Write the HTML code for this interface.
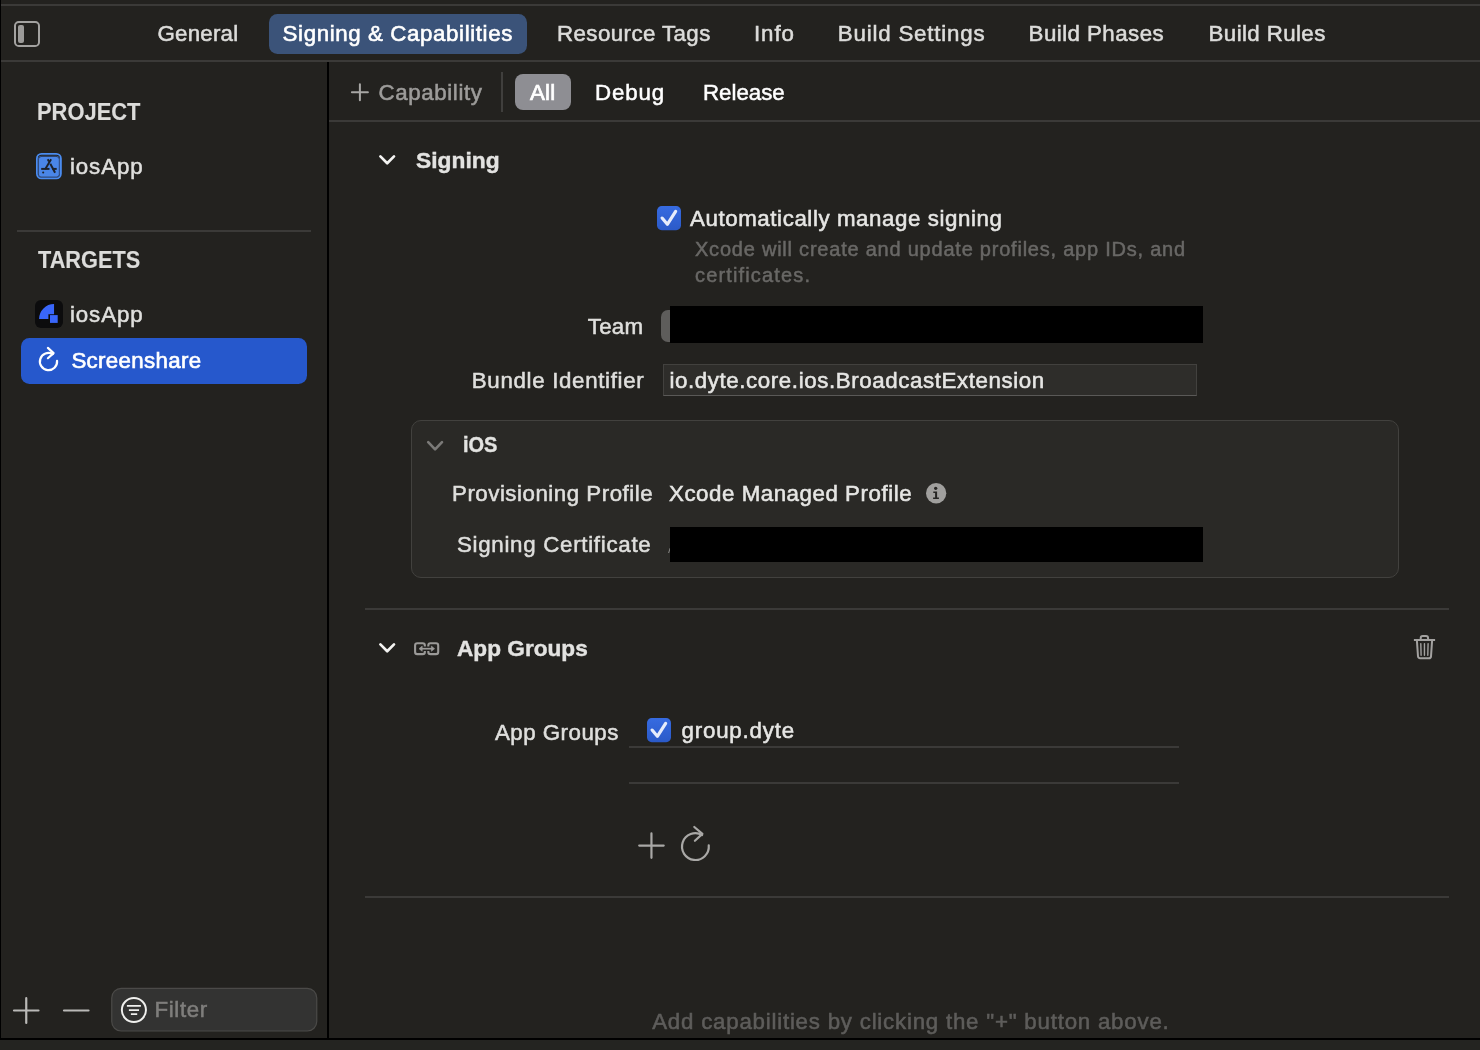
<!DOCTYPE html>
<html><head><meta charset="utf-8"><title>iosApp — Signing &amp; Capabilities</title>
<style>
html,body{margin:0;padding:0;background:#23221f;}
body{width:1480px;height:1050px;overflow:hidden;font-family:"Liberation Sans",sans-serif;}
#root{position:relative;width:1480px;height:1050px;overflow:hidden;background:#23221f;}
.t{position:absolute;white-space:nowrap;font-family:"Liberation Sans",sans-serif;}
.a{position:absolute;}
svg{position:absolute;overflow:visible;}
#txt{position:absolute;left:0;top:0;width:1480px;height:1050px;will-change:transform;}
.t{-webkit-text-stroke:0.55px currentColor;}

</style></head>
<body>
<div id="root">
<!-- window chrome lines -->
<div class="a" style="left:0;top:0;width:1.1px;height:1038px;background:#000"></div>
<div class="a" style="left:1px;top:4px;width:1479px;height:2px;background:#3b3a38"></div>
<div class="a" style="left:1px;top:60px;width:1479px;height:2px;background:#3b3a38"></div>
<div class="a" style="left:327px;top:62px;width:2px;height:976px;background:#000"></div>
<div class="a" style="left:0;top:1038px;width:1480px;height:2px;background:#000"></div>
<div class="a" style="left:0;top:1040px;width:1480px;height:10px;background:#242421"></div>
<!-- sidebar toggle -->
<svg style="left:0;top:0" width="60" height="60" viewBox="0 0 60 60">
 <rect x="15" y="22" width="24" height="24" rx="3.8" fill="none" stroke="#a3a2a0" stroke-width="2"/>
 <rect x="18" y="25" width="6" height="18" rx="2" fill="#9c9b99"/>
</svg>
<!-- selected tab -->
<div class="a" style="left:269px;top:13.8px;width:258px;height:40px;border-radius:8.5px;background:#3b5379"></div>
<!-- sidebar -->
<div class="a" style="left:17px;top:230px;width:294px;height:2px;background:#3b3a38"></div>
<div class="a" style="left:21px;top:338px;width:286px;height:45.75px;border-radius:8.5px;background:#2658cc"></div>
<!-- project icon -->
<svg style="left:35.9px;top:152.9px" width="25.8" height="26.3" viewBox="0 0 25.8 26.3">
 <rect x="0.9" y="0.9" width="24" height="24.5" rx="4.6" fill="none" stroke="#4a8cf0" stroke-width="1.8"/>
 <rect x="2.9" y="3.9" width="20" height="19.9" rx="2.2" fill="#4a86e8"/>
 <rect x="2.3" y="3.2" width="21.2" height="21.2" rx="2.8" fill="none" stroke="#35599c" stroke-width="0.9"/>
 <circle cx="7.2" cy="19.5" r="1.05" fill="#1d2128"/>
 <g stroke="#1d2128" stroke-width="1.95" stroke-linecap="butt" fill="none">
  <path d="M15.1 6.3 L9.2 16.3"/>
  <path d="M11.7 6.3 L13 8.5"/>
  <path d="M14.3 10.7 L19.1 19.8"/>
  <path d="M5.2 15.9 H13.5"/>
  <path d="M16.3 15.9 H20.7"/>
 </g>
</svg>
<!-- dyte app icon -->
<svg style="left:34.9px;top:299.9px" width="28" height="28" viewBox="0 0 28 28">
 <rect x="0" y="0" width="28" height="28" rx="6" fill="#0c0c0d"/>
 <path d="M4.05 19.05 A15 15 0 0 1 19.05 4.05 V14.2 H13.4 V19.05 Z" fill="#3966fa"/>
 <rect x="15" y="15.1" width="7.7" height="7.8" fill="#3966fa"/>
</svg>
<!-- refresh icon white -->
<svg style="left:0px;top:0px" width="80" height="400" viewBox="0 0 80 400">
 <g fill="none" stroke="#fff" stroke-width="2.2" stroke-linecap="round" stroke-linejoin="round">
  <path d="M57.07 360.75 A8.6 8.6 0 1 1 52.8 354.05"/>
  <path d="M47.9 347.9 L53.6 353.1 L47.9 358.2"/>
 </g>
</svg>
<!-- sidebar bottom -->
<svg style="left:0;top:980px" width="330" height="60" viewBox="0 0 330 60">
 <g stroke="#bab9b7" stroke-width="2.2" stroke-linecap="round">
  <path d="M14 30.5 H38.5 M26.25 18.2 V43"/>
  <path d="M64 30.5 H88.5"/>
 </g>
 <rect x="111.75" y="8.4" width="205" height="42.6" rx="9.5" fill="#333332" stroke="#4b4a48" stroke-width="1.2"/>
 <circle cx="133.9" cy="29.95" r="12.05" fill="none" stroke="#f0f0ee" stroke-width="2"/>
 <g stroke="#f0f0ee" stroke-width="1.8" stroke-linecap="butt">
  <path d="M126.9 25.9 H140.9 M128.9 30.1 H139.05 M130.9 34.1 H137.2"/>
 </g>
</svg>
<!-- sub header -->
<div class="a" style="left:329px;top:120px;width:1151px;height:2px;background:#3b3a38"></div>
<svg style="left:345px;top:80px" width="30" height="26" viewBox="0 0 30 26">
 <path d="M6.9 12.2 H22.9 M14.9 4.2 V20.2" stroke="#a8a7a5" stroke-width="2" stroke-linecap="round"/>
</svg>
<div class="a" style="left:501.4px;top:72.2px;width:1.3px;height:39.4px;background:#403f3d"></div>
<div class="a" style="left:514.9px;top:73.8px;width:56px;height:36.2px;border-radius:8px;background:#8e8e93"></div>
<!-- Signing chevron -->
<svg style="left:375px;top:150px" width="24" height="20" viewBox="0 0 24 20">
 <path d="M5.4 6.4 L12.2 13.2 L19 6.4" fill="none" stroke="#f4f4f2" stroke-width="2.7" stroke-linecap="round" stroke-linejoin="round"/>
</svg>
<!-- checkbox 1 -->
<svg style="left:657px;top:206px" width="24" height="24.2" viewBox="0 0 24 24.2">
 <defs><linearGradient id="cb" x1="0" y1="0" x2="0" y2="1"><stop offset="0" stop-color="#376be1"/><stop offset="1" stop-color="#2b5ac8"/></linearGradient></defs>
 <rect width="24" height="24.2" rx="4.8" fill="url(#cb)"/>
 <path d="M5.1 12.1 L10.35 18.35 L18.65 5.35" fill="none" stroke="#e6ecfb" stroke-width="3.2" stroke-linecap="round" stroke-linejoin="round"/>
</svg>
<!-- team popup -->
<div class="a" style="left:660.9px;top:309.9px;width:14px;height:32px;border-radius:7px 0 0 7px;background:#5e5d5b"></div>
<div class="a" style="left:670.2px;top:306.3px;width:532.5px;height:36.3px;background:#000"></div>
<!-- bundle field -->
<div class="a" style="left:662.9px;top:364px;width:534.3px;height:32px;box-sizing:border-box;background:#2e2d2a;border:1.1px solid #42413e;border-bottom-color:#5a5957"></div>
<!-- iOS box -->
<div class="a" style="left:411px;top:420px;width:988px;height:158px;box-sizing:border-box;border:1.7px solid #42413e;border-radius:10px;background:#2a2926"></div>
<svg style="left:423px;top:436px" width="24" height="20" viewBox="0 0 24 20">
 <path d="M5.2 6.2 L12.1 13.4 L19 6.2" fill="none" stroke="#7b7a78" stroke-width="2.6" stroke-linecap="round" stroke-linejoin="round"/>
</svg>
<!-- info icon -->
<svg style="left:925.9px;top:482.7px" width="20.3" height="20.5" viewBox="0 0 20.3 20.5">
 <circle cx="10.15" cy="10.25" r="10.15" fill="#a09f9d"/>
 <g fill="#262523"><circle cx="9.7" cy="5.3" r="1.65"/><path d="M7.3 8.5 H11.1 V14.4 H12.9 V16 H7.1 V14.4 H9.1 V9.9 H7.3 Z"/></g>
</svg>
<div class="a" style="left:669.4px;top:547.5px;width:1.4px;height:4.5px;background:#8a8987;transform:skewX(-18deg)"></div>
<div class="a" style="left:670.2px;top:526.6px;width:532.5px;height:35.7px;background:#000"></div>
<!-- section separators -->
<div class="a" style="left:365px;top:608px;width:1084px;height:2px;background:#3b3a38"></div>
<div class="a" style="left:365px;top:896px;width:1084px;height:2px;background:#3b3a38"></div>
<!-- App Groups header -->
<svg style="left:375px;top:638px" width="24" height="20" viewBox="0 0 24 20">
 <path d="M5.4 6.4 L12.2 13.2 L19 6.4" fill="none" stroke="#f4f4f2" stroke-width="2.7" stroke-linecap="round" stroke-linejoin="round"/>
</svg>
<svg style="left:400px;top:625px" width="60" height="40" viewBox="400 625 60 40">
 <g fill="none" stroke="#9b9a98" stroke-width="2.1" stroke-linecap="butt" stroke-linejoin="round">
  <path d="M424.85 646.4 V645.5 Q424.85 643.3 422.65 643.3 H417.3 Q415.1 643.3 415.1 645.5 V651.9 Q415.1 654.1 417.3 654.1 H422.65 Q424.85 654.1 424.85 651.9 V651"/>
  <path d="M428.3 646.4 V645.5 Q428.3 643.3 430.5 643.3 H436 Q438.2 643.3 438.2 645.5 V651.9 Q438.2 654.1 436 654.1 H430.5 Q428.3 654.1 428.3 651.9 V651"/>
 </g>
 <path d="M420.6 648.7 H433" stroke="#9b9a98" stroke-width="1.7" fill="none"/>
 <path d="M419 648.7 L422.2 646.1 V651.3 Z M434.6 648.7 L431.4 646.1 V651.3 Z" fill="#9b9a98" stroke="#9b9a98" stroke-width="0.6" stroke-linejoin="round"/>
</svg>
<!-- trash -->
<svg style="left:1395px;top:627px" width="60" height="40" viewBox="1395 627 60 40">
 <g fill="none" stroke="#a3a2a0" stroke-width="2" stroke-linecap="butt" stroke-linejoin="round">
  <path d="M1413.9 640 H1435.1"/>
  <path d="M1420.7 639.6 V637.9 Q1420.7 635.9 1422.7 635.9 H1426.05 Q1428.05 635.9 1428.05 637.9 V639.6"/>
  <path d="M1416.9 640.6 L1418 656.3 Q1418.15 658.2 1420.1 658.2 H1428.9 Q1430.85 658.2 1431 656.3 L1432.1 640.6"/>
 </g>
 <g fill="none" stroke="#a3a2a0" stroke-width="1.4" stroke-linecap="round">
  <path d="M1420.8 643.6 L1421.1 655.2 M1424.45 643.6 V655.2 M1428.1 643.6 L1427.8 655.2"/>
 </g>
</svg>
<!-- checkbox 2 -->
<svg style="left:647.1px;top:717.9px" width="24" height="24.2" viewBox="0 0 24 24.2">
 <rect width="24" height="24.2" rx="4.8" fill="url(#cb)"/>
 <path d="M5.1 12.1 L10.35 18.35 L18.65 5.35" fill="none" stroke="#e6ecfb" stroke-width="3.2" stroke-linecap="round" stroke-linejoin="round"/>
</svg>
<div class="a" style="left:629px;top:746px;width:550px;height:2px;background:#3b3a38"></div>
<div class="a" style="left:629px;top:782px;width:550px;height:2px;background:#3b3a38"></div>
<!-- plus + refresh -->
<svg style="left:600px;top:790px" width="185" height="105" viewBox="600 790 185 105">
 <g fill="none" stroke="#a9a8a6" stroke-width="2.2" stroke-linecap="round" stroke-linejoin="round">
  <path d="M639.2 845.6 H663.7 M651.45 833.4 V857.8"/>
  <path d="M708.75 845.4 A13.4 13.4 0 1 1 702.1 835"/>
  <path d="M694.3 827 L702.4 833.9 L694.9 840.8"/>
 </g>
</svg>

<div id="txt">
<span id="t1" class="t" style="left:157.40px;top:22.92px;font-size:22.3px;line-height:22.3px;font-weight:400;color:#dcdcda;letter-spacing:0.250px;">General</span>
<span id="t2" class="t" style="left:282.60px;top:22.92px;font-size:22.3px;line-height:22.3px;font-weight:400;color:#ffffff;letter-spacing:0.610px;-webkit-text-stroke:0.6px #fff;">Signing &amp; Capabilities</span>
<span id="t3" class="t" style="left:557.00px;top:22.92px;font-size:22.3px;line-height:22.3px;font-weight:400;color:#dcdcda;letter-spacing:0.417px;">Resource Tags</span>
<span id="t4" class="t" style="left:754.00px;top:22.92px;font-size:22.3px;line-height:22.3px;font-weight:400;color:#dcdcda;letter-spacing:0.900px;">Info</span>
<span id="t5" class="t" style="left:837.80px;top:22.92px;font-size:22.3px;line-height:22.3px;font-weight:400;color:#dcdcda;letter-spacing:0.808px;">Build Settings</span>
<span id="t6" class="t" style="left:1028.60px;top:22.92px;font-size:22.3px;line-height:22.3px;font-weight:400;color:#dcdcda;letter-spacing:0.445px;">Build Phases</span>
<span id="t7" class="t" style="left:1208.60px;top:22.92px;font-size:22.3px;line-height:22.3px;font-weight:400;color:#dcdcda;letter-spacing:0.390px;">Build Rules</span>
<span id="s1" class="t" style="left:36.90px;top:101.33px;font-size:23px;line-height:23px;font-weight:700;color:#dcdcda;letter-spacing:0.000px;-webkit-text-stroke:0.15px currentColor;transform:scale(0.9520,1.0000);transform-origin:0 84.65%;display:inline-block;">PROJECT</span>
<span id="s2" class="t" style="left:70.00px;top:156.37px;font-size:22.3px;line-height:22.3px;font-weight:400;color:#dfdfdd;letter-spacing:0.880px;">iosApp</span>
<span id="s3" class="t" style="left:38.10px;top:249.33px;font-size:23px;line-height:23px;font-weight:700;color:#dcdcda;letter-spacing:0.000px;-webkit-text-stroke:0.15px currentColor;transform:scale(0.9444,1.0000);transform-origin:0 84.65%;display:inline-block;">TARGETS</span>
<span id="s4" class="t" style="left:70.00px;top:303.87px;font-size:22.3px;line-height:22.3px;font-weight:400;color:#dfdfdd;letter-spacing:0.880px;">iosApp</span>
<span id="s5" class="t" style="left:71.40px;top:349.72px;font-size:22.3px;line-height:22.3px;font-weight:400;color:#ffffff;letter-spacing:0.325px;-webkit-text-stroke:0.65px #fff;">Screenshare</span>
<span id="c1" class="t" style="left:378.60px;top:82.22px;font-size:22.3px;line-height:22.3px;font-weight:400;color:#9d9c9a;letter-spacing:0.600px;">Capability</span>
<span id="c2" class="t" style="left:530.00px;top:82.22px;font-size:22.3px;line-height:22.3px;font-weight:400;color:#ffffff;letter-spacing:0.200px;-webkit-text-stroke:0.7px #fff;">All</span>
<span id="c3" class="t" style="left:595.00px;top:82.22px;font-size:22.3px;line-height:22.3px;font-weight:400;color:#ffffff;letter-spacing:0.875px;-webkit-text-stroke:0.5px #fff;">Debug</span>
<span id="c4" class="t" style="left:703.00px;top:82.22px;font-size:22.3px;line-height:22.3px;font-weight:400;color:#ffffff;letter-spacing:-0.017px;-webkit-text-stroke:0.5px #fff;">Release</span>
<span id="h1" class="t" style="left:415.60px;top:149.85px;font-size:22.5px;line-height:22.5px;font-weight:700;color:#e3e3e1;letter-spacing:0.000px;-webkit-text-stroke:0.4px currentColor;transform:scale(1.0131,1.0000);transform-origin:0 84.65%;display:inline-block;">Signing</span>
<span id="m1" class="t" style="left:690.00px;top:207.82px;font-size:22.3px;line-height:22.3px;font-weight:400;color:#e6e6e4;letter-spacing:0.583px;">Automatically manage signing</span>
<span id="m2" class="t" style="left:695.00px;top:239.17px;font-size:20px;line-height:20px;font-weight:400;color:#696866;letter-spacing:0.775px;-webkit-text-stroke:0.5px currentColor;">Xcode will create and update profiles, app IDs, and</span>
<span id="m3" class="t" style="left:695.00px;top:265.17px;font-size:20px;line-height:20px;font-weight:400;color:#696866;letter-spacing:1.150px;-webkit-text-stroke:0.5px currentColor;">certificates.</span>
<span id="m4" class="t" style="left:587.75px;top:316.07px;font-size:22.3px;line-height:22.3px;font-weight:400;color:#dfdfdd;letter-spacing:0.267px;">Team</span>
<span id="m5" class="t" style="left:471.80px;top:370.12px;font-size:22.3px;line-height:22.3px;font-weight:400;color:#dfdfdd;letter-spacing:0.675px;">Bundle Identifier</span>
<span id="m6" class="t" style="left:669.40px;top:370.12px;font-size:22.3px;line-height:22.3px;font-weight:400;color:#e6e6e4;letter-spacing:0.599px;">io.dyte.core.ios.BroadcastExtension</span>
<span id="b1" class="t" style="left:463.00px;top:434.45px;font-size:22.5px;line-height:22.5px;font-weight:700;color:#e3e3e1;letter-spacing:0.000px;-webkit-text-stroke:0.4px currentColor;transform:scale(0.8888,1.0000);transform-origin:0 84.65%;display:inline-block;">iOS</span>
<span id="b2" class="t" style="left:452.00px;top:482.82px;font-size:22.3px;line-height:22.3px;font-weight:400;color:#dfdfdd;letter-spacing:0.513px;">Provisioning Profile</span>
<span id="b3" class="t" style="left:669.00px;top:482.82px;font-size:22.3px;line-height:22.3px;font-weight:400;color:#e6e6e4;letter-spacing:0.537px;">Xcode Managed Profile</span>
<span id="b4" class="t" style="left:457.00px;top:533.87px;font-size:22.3px;line-height:22.3px;font-weight:400;color:#dfdfdd;letter-spacing:0.708px;">Signing Certificate</span>
<span id="h2" class="t" style="left:456.80px;top:637.55px;font-size:22.5px;line-height:22.5px;font-weight:700;color:#e3e3e1;letter-spacing:0.000px;-webkit-text-stroke:0.4px currentColor;transform:scale(1.0061,1.0000);transform-origin:0 84.65%;display:inline-block;">App Groups</span>
<span id="g1" class="t" style="left:495.00px;top:722.02px;font-size:22.3px;line-height:22.3px;font-weight:400;color:#dfdfdd;letter-spacing:0.478px;">App Groups</span>
<span id="g2" class="t" style="left:681.50px;top:719.82px;font-size:22.3px;line-height:22.3px;font-weight:400;color:#e6e6e4;letter-spacing:0.806px;">group.dyte</span>
<span id="f1" class="t" style="left:154.50px;top:998.82px;font-size:22.3px;line-height:22.3px;font-weight:400;color:#7f7e7c;letter-spacing:0.650px;">Filter</span>
<span id="f2" class="t" style="left:652.20px;top:1010.92px;font-size:22.3px;line-height:22.3px;font-weight:400;color:#5e5d5b;letter-spacing:0.771px;">Add capabilities by clicking the "+" button above.</span>
</div>
</div>
</body></html>
